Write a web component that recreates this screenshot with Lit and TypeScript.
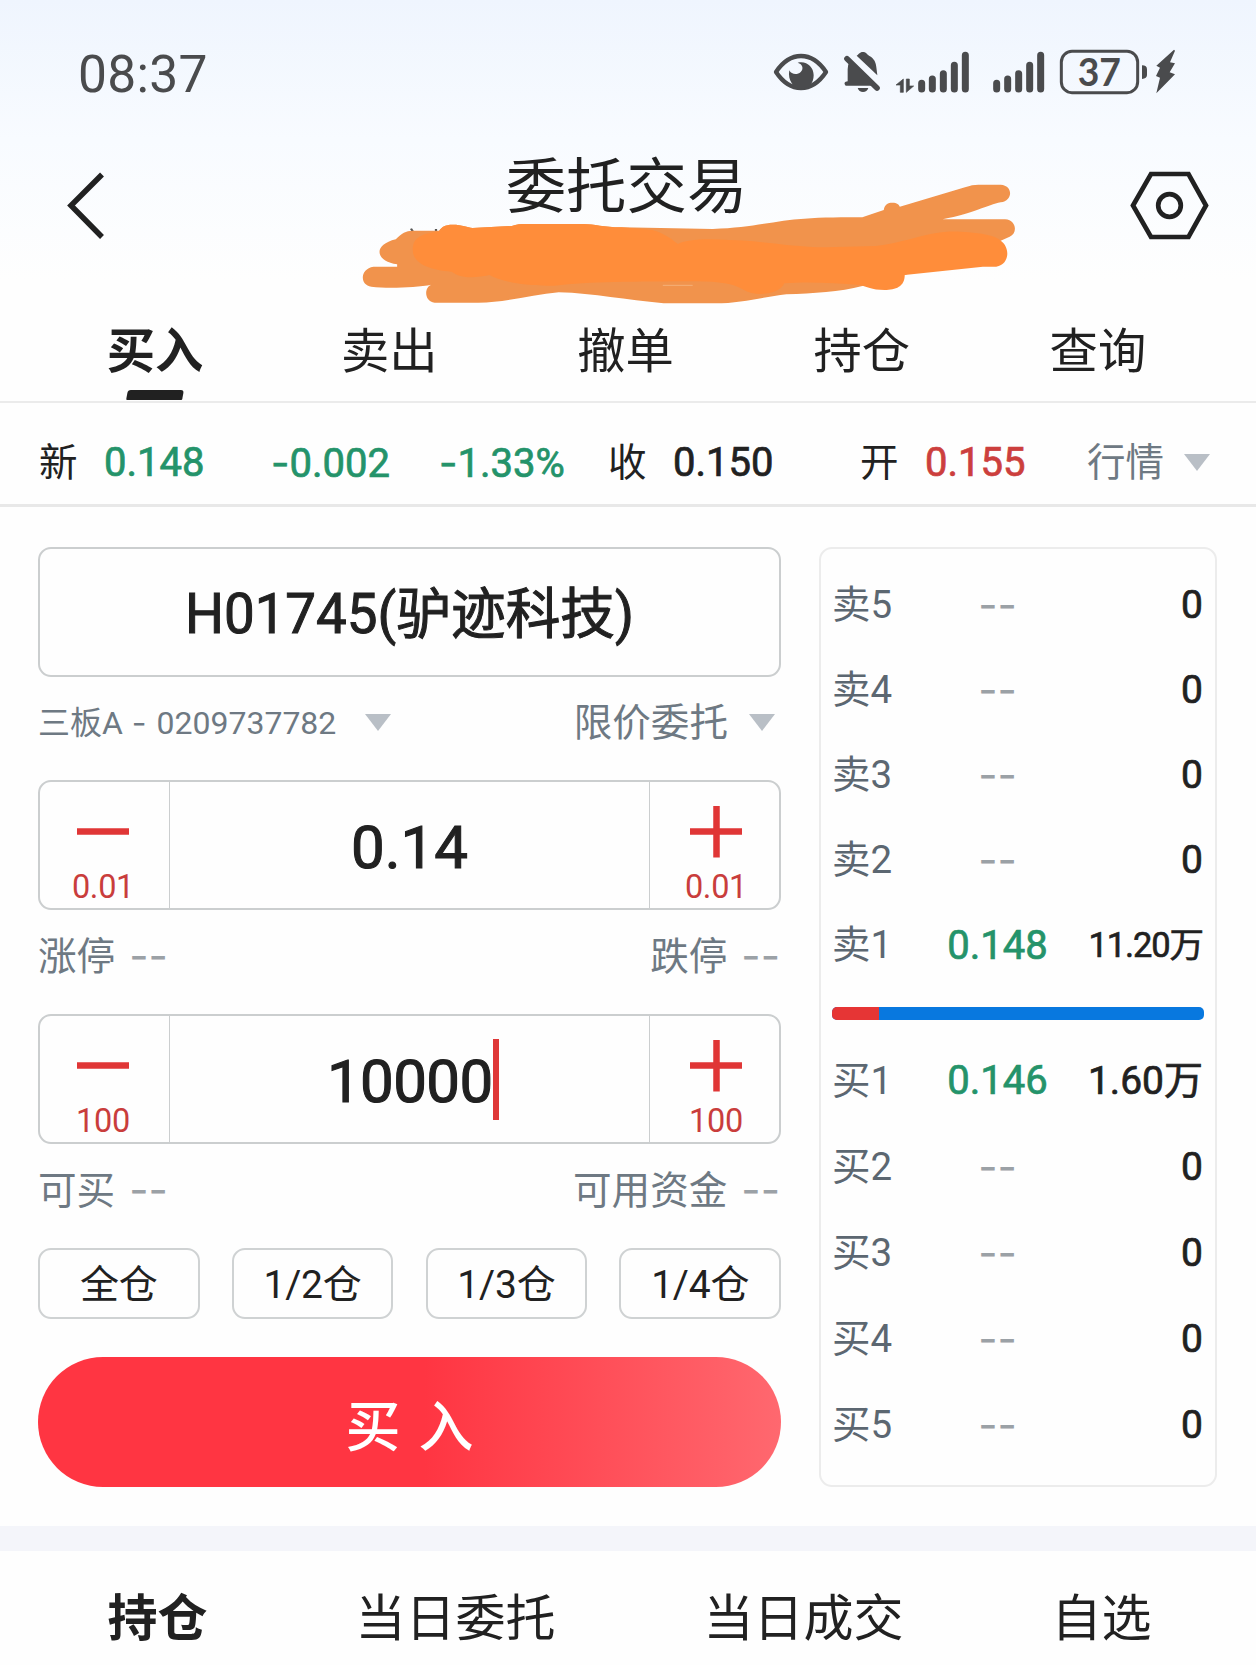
import { LitElement, html, svg, css, nothing } from "lit";
import { customElement, property } from "lit/decorators.js";
import { classMap } from "lit/directives/class-map.js";

const base = css`
  * {
    box-sizing: border-box;
  }
  .dash {
    font-family: Inter, "Liberation Sans", sans-serif;
    font-weight: 400;
    font-size: 42px;
    color: #9ba1a6;
    -webkit-text-stroke: 0;
  }
  .medium {
    font-weight: 400;
    -webkit-text-stroke: 0.018em currentColor;
  }
`;

@customElement("order-stepper")
export class OrderStepper extends LitElement {
  @property() value = "";
  @property() step = "";
  @property({ type: Boolean }) active = false;

  static styles = [
    base,
    css`
      :host {
        display: block;
        flex: none;
      }
      .box {
        display: grid;
        grid-template-columns: 130px 1fr 130px;
        height: 130px;
        border: 2px solid #cbcecf;
        border-radius: 13px;
      }
      .side {
        display: flex;
        flex-direction: column;
        align-items: center;
        padding-top: 24px;
        color: #c93d3c;
        font-size: 32.5px;
        line-height: 40px;
        letter-spacing: -0.3px;
      }
      .side:first-child {
        border-right: 1.5px solid #cbcecf;
        padding-right: 3px;
      }
      .side:last-child {
        border-left: 1.5px solid #cbcecf;
        padding-left: 3px;
      }
      .side svg {
        display: block;
        flex: none;
        margin-bottom: 9px;
      }
      .value {
        display: flex;
        align-items: center;
        justify-content: center;
        font-size: 60px;
        padding-top: 5px;
      }
      .caret {
        width: 6.5px;
        height: 81px;
        background: #df3838;
        margin-right: -7px;
        margin-top: -4px;
      }
      .focus {
        letter-spacing: -0.6px;
      }
    `,
  ];

  render() {
    const minus = svg`<path d="M1 25.5H53" stroke="#e03636" stroke-width="6.5"/>`;
    const plus = svg`<path d="M1 25.5H53M27.5 -0.5V51.5" stroke="#e03636" stroke-width="6.5"/>`;
    const side = (icon: unknown) => html`<div class="side">
      <svg width="54" height="52" viewBox="0 0 54 52">${icon}</svg>
      <span>${this.step}</span>
    </div>`;
    return html`<div class="box">
      ${side(minus)}
      <div class=${classMap({ value: true, medium: true, focus: this.active })}>
        <span>${this.value}</span>${this.active ? html`<i class="caret"></i>` : nothing}
      </div>
      ${side(plus)}
    </div>`;
  }
}

@customElement("depth-row")
export class DepthRow extends LitElement {
  @property() label = "";
  @property() price = "";
  @property() volume = "0";

  static styles = [
    base,
    css`
      :host {
        display: grid;
        grid-template-columns: 80px 1fr 116px;
        align-items: center;
        height: 100%;
      }
      .label {
        color: #5c6771;
        font-size: 38.5px;
      }
      .price {
        color: #24936a;
        font-size: 40px;
        text-align: center;
        padding-right: 4px;
      }
      .volume {
        text-align: right;
        font-size: 39px;
        white-space: nowrap;
        margin-left: -20px;
      }
      .long {
        font-size: 34.5px;
        letter-spacing: -1.1px;
      }
    `,
  ];

  render() {
    return html`<span class="label">${this.label}</span>
      <span class="price medium">${this.price ? this.price : html`<span class="dash">--</span>`}</span>
      <span class=${classMap({ volume: true, medium: true, long: this.volume.length > 5 })}>${this.volume}</span>`;
  }
}

@customElement("app-root")
export class AppRoot extends LitElement {
  static styles = [
    base,
    css`
      :host {
        display: flex;
        flex-direction: column;
        width: 1256px;
        height: 1665px;
        overflow: hidden;
        background: linear-gradient(#eff5fe 0, #f8fbff 140px, #fefefe 280px, #fefefe 100%);
        color: #212121;
        font-family: Roboto, "Noto Sans CJK SC", sans-serif;
        line-height: 1.2;
        white-space: nowrap;
      }
      svg {
        display: block;
        flex: none;
      }
      .status {
        display: flex;
        justify-content: space-between;
        height: 120px;
        padding: 30px 56px 0 78px;
        color: #4a4b4d;
      }
      .time {
        font-size: 51.5px;
        line-height: 89px;
        letter-spacing: 0.3px;
      }
      .header {
        position: relative;
        display: flex;
        justify-content: space-between;
        height: 182px;
        padding: 50px 46px 0 66px;
      }
      .title {
        font-size: 60.4px;
        line-height: 72px;
        margin: -18px 0 0 17px;
      }
      .scribble {
        position: absolute;
        left: 340px;
        top: 20px;
      }
      .tabs {
        display: flex;
        height: 101px;
        padding: 0 39px 0 38px;
        border-bottom: 2px solid #ebebeb;
      }
      .tab {
        flex: 1;
        display: flex;
        flex-direction: column;
        align-items: center;
        justify-content: space-between;
        font-size: 48.3px;
        line-height: 99px;
      }
      .tab:not(.on) {
        padding-right: 2px;
      }
      .on {
        font-weight: 700;
      }
      .mark {
        width: 56px;
        height: 10px;
        margin-top: -11px;
        margin-bottom: 1px;
        background: #212121;
        border-radius: 3px 3px 1px 1px;
        transform: skewX(-10deg);
      }
      .quote {
        display: flex;
        align-items: center;
        height: 104px;
        padding: 19px 0 0 39px;
        border-bottom: 3px solid #e8e8e8;
        font-size: 38.5px;
      }
      .quote svg {
        margin-top: -2px;
      }
      .num {
        font-size: 40px;
      }
      .sign {
        font-family: Inter, sans-serif;
        margin-left: -1px;
      }
      .green {
        color: #24936a;
      }
      .red {
        color: #cc3f3d;
      }
      .grey {
        color: #6e7983;
      }
      .c1 { width: 65px; }
      .c2 { width: 168px; }
      .c3 { width: 168px; }
      .c4 { width: 168px; }
      .c5 { width: 65px; }
      .c6 { width: 187px; }
      .c7 { width: 65px; }
      .c8 { width: 162px; }
      .c9 { width: 97px; }
      .main {
        display: grid;
        grid-template-columns: 743px 398px;
        column-gap: 38px;
        padding: 40px 38px 39px;
      }
      .form {
        display: flex;
        flex-direction: column;
        height: 940px;
      }
      .form > * {
        flex: none;
      }
      .stock {
        height: 130px;
        border: 2px solid #cbcecf;
        border-radius: 13px;
        display: flex;
        align-items: center;
        justify-content: center;
        font-size: 54.7px;
        padding-top: 5px;
      }
      .line {
        display: flex;
        align-items: center;
        justify-content: space-between;
        font-size: 38.6px;
        color: #6e7983;
      }
      .pair {
        display: flex;
        align-items: center;
      }
      .account {
        height: 103px;
        padding: 0 6px 11px 0;
      }
      .account svg {
        margin-top: -1px;
      }
      .acct {
        font-size: 32px;
      }
      .acct .sign {
        margin: 0 2px 0 1px;
      }
      .acct + svg {
        margin-left: 29px;
      }
      .type + svg {
        margin-left: 21px;
      }
      .info {
        height: 104px;
        padding: 0 1px 9px 0;
      }
      .info .pair {
        gap: 14px;
      }
      .info .dash {
        margin-top: -3px;
      }
      .chips {
        display: grid;
        grid-template-columns: repeat(4, 161.5px);
        justify-content: space-between;
        height: 71px;
      }
      .chip {
        display: flex;
        align-items: center;
        justify-content: center;
        border: 2px solid #cfd2d3;
        border-radius: 13px;
        font-size: 39px;
        padding-top: 4px;
        letter-spacing: -0.2px;
      }
      .buy {
        margin-top: 38px;
        height: 130px;
        border-radius: 65px;
        background: linear-gradient(90deg, #ff3542 0, #ff3542 52%, #ff686f 100%);
        color: #fff;
        font-size: 55px;
        font-weight: 500;
        display: flex;
        align-items: center;
        justify-content: center;
        gap: 18px;
        padding-top: 9px;
      }
      .book {
        height: 940px;
        border: 2px solid #ececec;
        border-radius: 13px;
        padding: 14px 11px 0;
      }
      .asks {
        display: grid;
        grid-template-rows: repeat(5, 85px);
        padding-right: 1px;
      }
      .bids {
        display: grid;
        grid-template-rows: repeat(5, 86px);
        padding-right: 1px;
      }
      .ratio {
        display: flex;
        height: 13px;
        margin: 19px 0 18px;
        border-radius: 5px;
        overflow: hidden;
        background: #0878df;
      }
      .ratio-buy {
        background: #e63535;
      }
      .band {
        height: 25px;
        background: #f4f5fa;
      }
      .bottom {
        display: flex;
        gap: 148px;
        height: 114px;
        padding-left: 107.5px;
        font-size: 50px;
        line-height: 136px;
      }
    `,
  ];

  private down() {
    return html`<svg width="26" height="17" viewBox="0 0 26 17"><path d="M0 0H26L13 17Z" fill="#b9bfc6" /></svg>`;
  }

  private statusIcons() {
    return html`<svg width="450" height="90" viewBox="0 0 1350 270">
      <path d="M78 126C98 96 124 78 153 78S208 96 228 126C208 156 182 174 153 174S98 156 78 126Z" fill="none" stroke="#4a4b4d" stroke-width="13" stroke-linejoin="round" />
      <path d="M118 121C124 134 142 136 152 126C162 116 158 102 143 98C168 91 191 109 191 136C191 160 176 176 153 176C132 176 112 152 118 121Z" fill="#4a4b4d" />
      <path d="M291 86L381 174" stroke="#4a4b4d" stroke-width="17" stroke-linecap="round" />
      <path d="M295 88L367 158V167H287Q280 158 287 155L293 154V118Q293 103 299 95Z" fill="#4a4b4d" />
      <path d="M320 77C326 74 328 66 339 66C349 66 350 73 357 77C373 85 378 98 379 112L382 136Z" fill="#4a4b4d" />
      <path d="M323 174H355Q351 186 339 186T323 174Z" fill="#4a4b4d" />
      <path d="M460 147V187H451V165H438ZM469 187V147H478V168H491Z" fill="#4a4b4d" stroke="#4a4b4d" stroke-width="2" />
      <g stroke="#4a4b4d" stroke-width="21" stroke-linecap="round">
        <path d="M515 160V177M547 147V177M580 131V177M613 106V177M646 76V177" />
        <path d="M740 160V177M773 147V177M806 131V177M839 106V177M872 76V177" />
      </g>
      <rect x="934" y="64" width="229" height="124" rx="32" fill="none" stroke="#4a4b4d" stroke-width="9" />
      <text x="1048" y="167" text-anchor="middle" font-family="Lato, Roboto, sans-serif" font-weight="700" font-size="112" fill="#4a4b4d">37</text>
      <path d="M1176 106Q1191 106 1191 118V135Q1191 146 1176 147Z" fill="#4a4b4d" />
      <path d="M1272 59L1219 107L1230 113L1218 138L1230 143L1219 190L1275 133L1259 127L1275 100L1260 97L1275 62Z" fill="#4a4b4d" />
    </svg>`;
  }

  private scribble() {
    return html`<svg class="scribble" width="700" height="180" viewBox="0 0 1568 540" preserveAspectRatio="none">
      <path d="M159 266L163 274M215 267V274" stroke="#555" stroke-width="5" />
      <path d="M125 298C138 280 148 272 162 272H222C228 260 236 254 252 254C275 254 285 262 297 264L385 258C395 253 405 252 420 252H545C570 252 590 262 630 262L835 267C930 262 980 240 1040 236C1080 232 1130 232 1170 232L1218 210C1220 192 1228 188 1237 188C1248 188 1252 194 1254 200L1400 142C1412 136 1420 134 1430 134H1480C1508 136 1508 182 1480 187C1450 195 1420 220 1350 238H1490C1516 240 1518 282 1500 290L1480 302L1265 405L1170 438C1120 456 1060 460 1000 463C950 470 900 490 840 490H725C640 480 570 460 490 457C430 464 370 488 310 488H212C188 486 188 440 205 434C170 442 110 446 70 440C44 436 44 386 75 380H128V373C80 364 72 315 125 298Z" fill="#f1934c" />
      <path d="M163 330C163 290 185 282 222 274C228 260 236 254 252 254C275 254 285 262 297 264L385 258C395 253 405 252 420 252H545C570 252 590 262 630 262L700 270C730 282 745 300 757 312C770 300 820 294 870 300C950 302 1000 320 1090 322L1200 318C1280 305 1320 270 1390 275C1440 278 1470 288 1480 302C1502 322 1500 374 1470 380H1440L1265 405C1265 440 1245 450 1220 450C1190 450 1180 440 1165 435C1110 428 1040 425 995 430C985 465 930 470 905 450C880 430 850 425 800 424C650 425 560 425 480 437C420 440 360 425 335 405C300 415 270 415 250 395C200 390 163 370 163 330Z" fill="#ff8d3a" />
      <path d="M723 436H790" stroke="#f5b078" stroke-width="3" />
    </svg>`;
  }

  render() {
    const tabs = ["买入", "卖出", "撤单", "持仓", "查询"];
    const asks = [["卖5"], ["卖4"], ["卖3"], ["卖2"], ["卖1", "0.148", "11.20万"]];
    const bids = [["买1", "0.146", "1.60万"], ["买2"], ["买3"], ["买4"], ["买5"]];
    const row = ([l, p = "", v = "0"]: string[]) =>
      html`<depth-row .label=${l} .price=${p} .volume=${v}></depth-row>`;
    const ratio = (1.6 / (11.2 + 1.6)) * 100;
    const info = (l: string) => html`<span class="pair"><span>${l}</span><span class="dash">--</span></span>`;

    return html`
      <div class="status"><span class="time">08:37</span>${this.statusIcons()}</div>
      <div class="header">
        <svg width="40" height="70" viewBox="0 0 40 70"><path d="M36 4.5L5 35.500L36 67" fill="none" stroke="#212121" stroke-width="5.500" /></svg>
        <div class="title">委托交易</div>
        <svg width="80" height="70" viewBox="0 0 80 70">
          <path d="M3 35.5L21 4H58.500L76 35.500L58.500 67H21Z" fill="none" stroke="#212121" stroke-width="4.700" />
          <circle cx="39.500" cy="35.500" r="11.300" fill="none" stroke="#212121" stroke-width="4.700" />
        </svg>
        ${this.scribble()}
      </div>
      <div class="tabs">
        ${tabs.map(
          (t, i) => html`<div class=${classMap({ tab: true, on: i === 0 })}>
            <span>${t}</span>${i === 0 ? html`<i class="mark"></i>` : nothing}
          </div>`,
        )}
      </div>
      <div class="quote">
        <span class="c1">新</span><span class="c2 num medium green">0.148</span>
        <span class="c3 num medium green"><span class="sign">-</span>0.002</span>
        <span class="c4 num medium green"><span class="sign">-</span>1.33%</span>
        <span class="c5">收</span><span class="c6 num medium">0.150</span>
        <span class="c7">开</span><span class="c8 num medium red">0.155</span>
        <span class="c9 grey">行情</span>${this.down()}
      </div>
      <div class="main">
        <div class="form">
          <div class="stock medium">H01745(驴迹科技)</div>
          <div class="line account">
            <span class="pair"><span class="acct">三板A <span class="sign">-</span> 0209737782</span>${this.down()}</span>
            <span class="pair"><span class="type">限价委托</span>${this.down()}</span>
          </div>
          <order-stepper value="0.14" step="0.01"></order-stepper>
          <div class="line info">${info("涨停")}${info("跌停")}</div>
          <order-stepper value="10000" step="100" active></order-stepper>
          <div class="line info">${info("可买")}${info("可用资金")}</div>
          <div class="chips">
            ${["全仓", "1/2仓", "1/3仓", "1/4仓"].map((c) => html`<div class="chip">${c}</div>`)}
          </div>
          <div class="buy"><span>买</span><span>入</span></div>
        </div>
        <div class="book">
          <div class="asks">${asks.map(row)}</div>
          <div class="ratio"><div class="ratio-buy" style="width:${ratio}%"></div></div>
          <div class="bids">${bids.map(row)}</div>
        </div>
      </div>
      <div class="band"></div>
      <div class="bottom">
        <span class="on">持仓</span><span>当日委托</span><span>当日成交</span><span>自选</span>
      </div>
    `;
  }
}
